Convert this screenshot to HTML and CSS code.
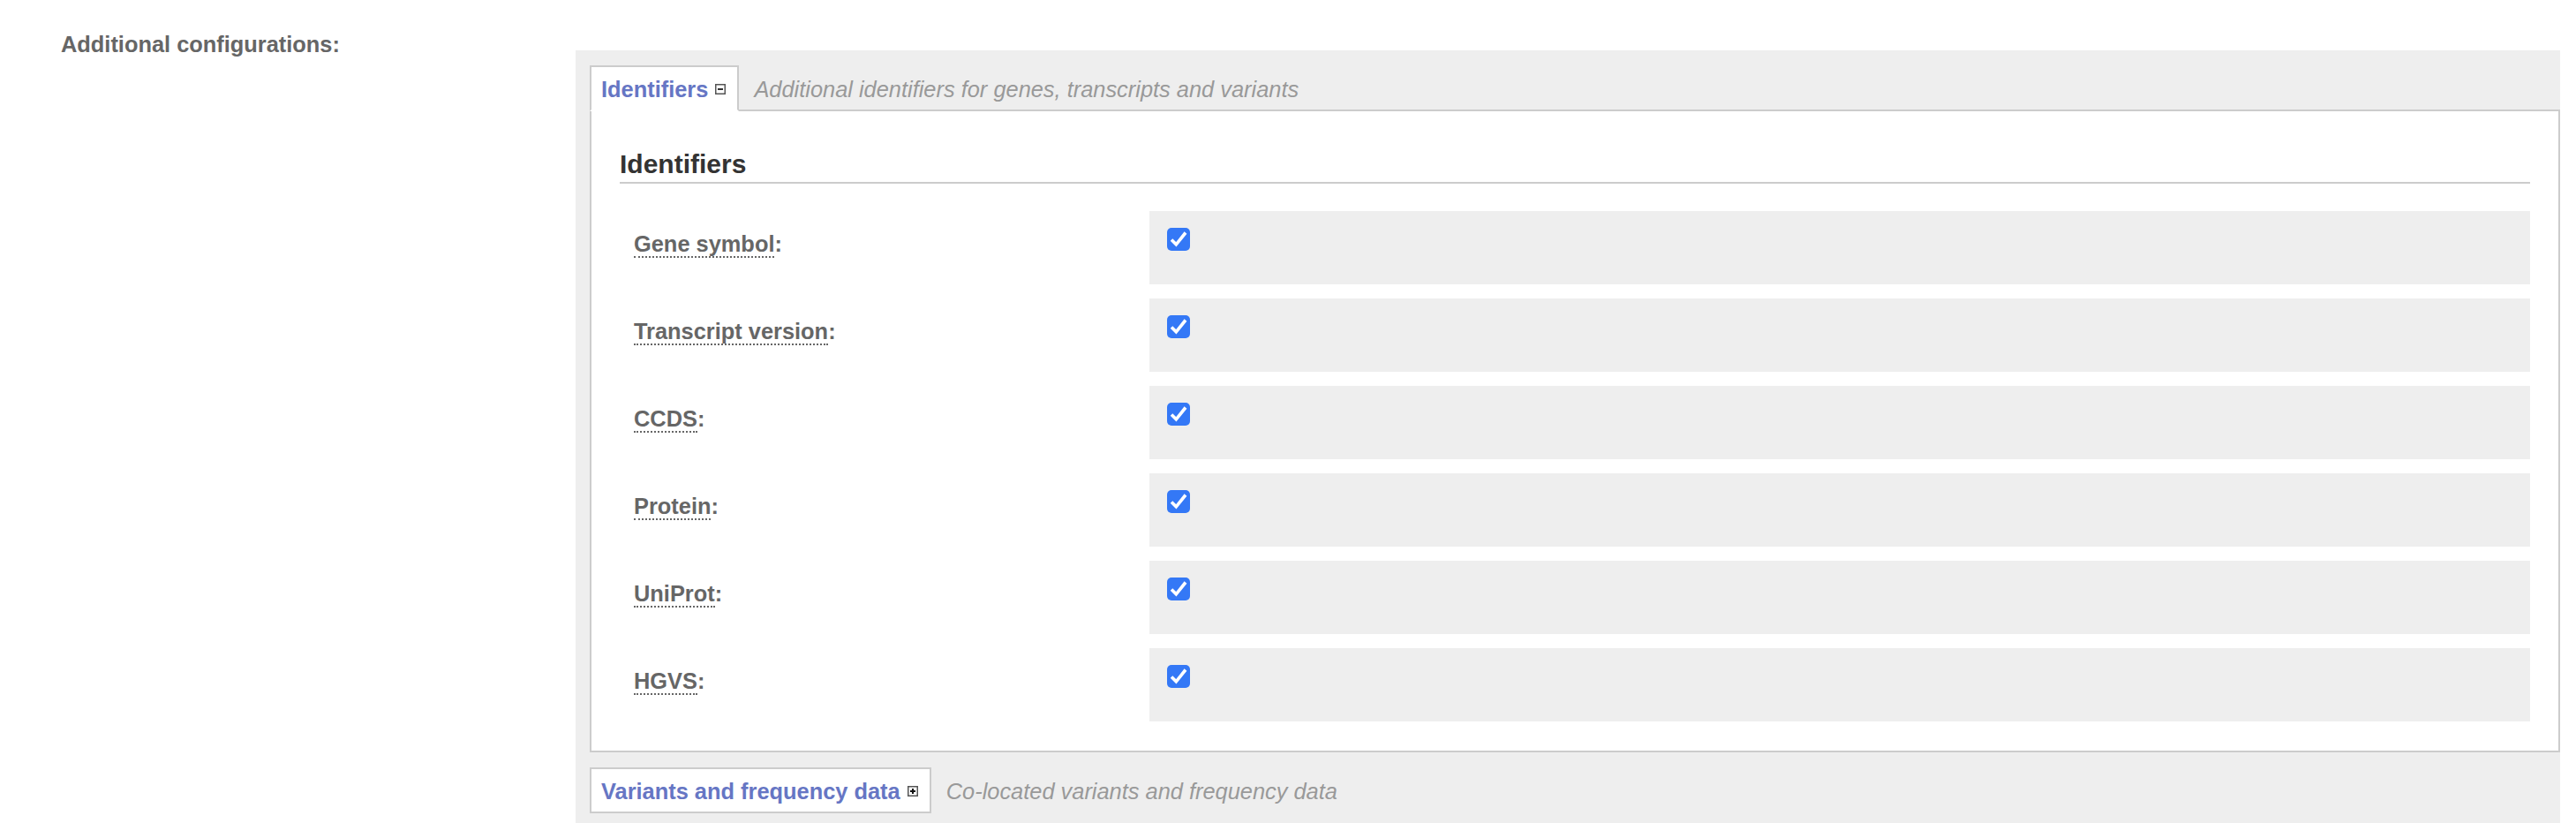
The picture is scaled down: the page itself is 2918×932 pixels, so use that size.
FILE: index.html
```html
<!DOCTYPE html>
<html>
<head>
<meta charset="utf-8">
<link rel="stylesheet" href="styles.css">
</head>
<body>
<div class="config-row">
  <div class="config-label">Additional configurations:</div>
  <div class="config-panel">
    <div class="tab-bar">
      <div class="tab tab-open">Identifiers <svg class="toggle" width="12" height="12" viewBox="0 0 12 12"><rect x="0.75" y="0.75" width="10.5" height="10.5" fill="#fff" stroke="#555" stroke-width="1.5"/><rect x="3" y="5" width="6" height="2" fill="#333"/></svg></div>
      <div class="tab-desc">Additional identifiers for genes, transcripts and variants</div>
    </div>
    <div class="tab-content">
      <h2 class="section-title">Identifiers</h2>
      <div class="opt-list">
        <div class="opt-row">
          <div class="opt-label"><span class="ht">Gene symbol</span>:</div>
          <div class="opt-value"><span class="cb"><svg width="26" height="26" viewBox="0 0 26 26"><rect width="26" height="26" rx="5" fill="#3478f6"/><path d="M5 13.5 L10.3 18.8 L21 5.5" fill="none" stroke="#fff" stroke-width="3.6"/></svg></span></div>
        </div>
        <div class="opt-row">
          <div class="opt-label"><span class="ht">Transcript version</span>:</div>
          <div class="opt-value"><span class="cb"><svg width="26" height="26" viewBox="0 0 26 26"><rect width="26" height="26" rx="5" fill="#3478f6"/><path d="M5 13.5 L10.3 18.8 L21 5.5" fill="none" stroke="#fff" stroke-width="3.6"/></svg></span></div>
        </div>
        <div class="opt-row">
          <div class="opt-label"><span class="ht">CCDS</span>:</div>
          <div class="opt-value"><span class="cb"><svg width="26" height="26" viewBox="0 0 26 26"><rect width="26" height="26" rx="5" fill="#3478f6"/><path d="M5 13.5 L10.3 18.8 L21 5.5" fill="none" stroke="#fff" stroke-width="3.6"/></svg></span></div>
        </div>
        <div class="opt-row">
          <div class="opt-label"><span class="ht">Protein</span>:</div>
          <div class="opt-value"><span class="cb"><svg width="26" height="26" viewBox="0 0 26 26"><rect width="26" height="26" rx="5" fill="#3478f6"/><path d="M5 13.5 L10.3 18.8 L21 5.5" fill="none" stroke="#fff" stroke-width="3.6"/></svg></span></div>
        </div>
        <div class="opt-row">
          <div class="opt-label"><span class="ht">UniProt</span>:</div>
          <div class="opt-value"><span class="cb"><svg width="26" height="26" viewBox="0 0 26 26"><rect width="26" height="26" rx="5" fill="#3478f6"/><path d="M5 13.5 L10.3 18.8 L21 5.5" fill="none" stroke="#fff" stroke-width="3.6"/></svg></span></div>
        </div>
        <div class="opt-row">
          <div class="opt-label"><span class="ht">HGVS</span>:</div>
          <div class="opt-value"><span class="cb"><svg width="26" height="26" viewBox="0 0 26 26"><rect width="26" height="26" rx="5" fill="#3478f6"/><path d="M5 13.5 L10.3 18.8 L21 5.5" fill="none" stroke="#fff" stroke-width="3.6"/></svg></span></div>
        </div>
      </div>
    </div>
    <div class="tab-bar tab-bar-closed">
      <div class="tab">Variants and frequency data <svg class="toggle" width="12" height="12" viewBox="0 0 12 12"><rect x="0.75" y="0.75" width="10.5" height="10.5" fill="#fff" stroke="#555" stroke-width="1.5"/><rect x="3" y="5" width="6" height="2" fill="#111"/><rect x="5" y="3" width="2" height="6" fill="#111"/></svg></div>
      <div class="tab-desc">Co-located variants and frequency data</div>
    </div>
  </div>
</div>
</body>
</html>
```

FILE: styles.css
```css
html, body {
  margin: 0;
  padding: 0;
  background: #fff;
}

body {
  font-family: "Liberation Sans", Arial, sans-serif;
  font-size: 25.4px;
  line-height: 30px;
  color: #666;
}

.config-row {
  display: flex;
  align-items: flex-start;
}

.config-label {
  flex: 0 0 652px;
  box-sizing: border-box;
  padding: 35px 0 0 69px;
  font-weight: bold;
  color: #666;
}

.config-panel {
  flex: 1 1 auto;
  margin: 57px 18px 0 0;
  padding: 17px 0 12px 16px;
  background: #eee;
}

.tab-bar {
  display: flex;
  align-items: baseline;
}

.tab {
  position: relative;
  z-index: 1;
  background: #fff;
  border: 2px solid #ccc;
  padding: 10px 13px 8px 11px;
  font-weight: bold;
  color: #6676c4;
  white-space: nowrap;
}

.tab-open {
  border-bottom-color: #fff;
}

.toggle {
  vertical-align: 3px;
  margin-left: 1px;
}

.tab-desc {
  margin-left: 17px;
  font-style: italic;
  color: #999;
  white-space: nowrap;
}

.tab-content {
  margin-top: -2px;
  background: #fff;
  border: 2px solid #ccc;
  padding: 42px 32px 33px 32px;
}

.section-title {
  margin: 0;
  font-size: 30px;
  line-height: 36px;
  font-weight: bold;
  color: #333;
  padding-bottom: 2px;
  border-bottom: 2px solid #ccc;
}

.opt-list {
  display: flex;
  flex-direction: column;
  gap: 16px;
  margin-top: 31px;
}

.opt-row {
  display: flex;
  height: 83px;
}

.opt-label {
  flex: 0 0 600px;
  box-sizing: border-box;
  padding: 22px 0 0 16px;
  font-weight: bold;
  color: #666;
}

.ht {
  border-bottom: 2px dotted #666;
}

.opt-value {
  flex: 1 1 auto;
  background: #eee;
  padding: 19px 20px;
}

.cb {
  display: block;
  width: 26px;
  height: 26px;
}

.cb svg {
  display: block;
}

.tab-bar-closed {
  margin-top: 17px;
}
```
